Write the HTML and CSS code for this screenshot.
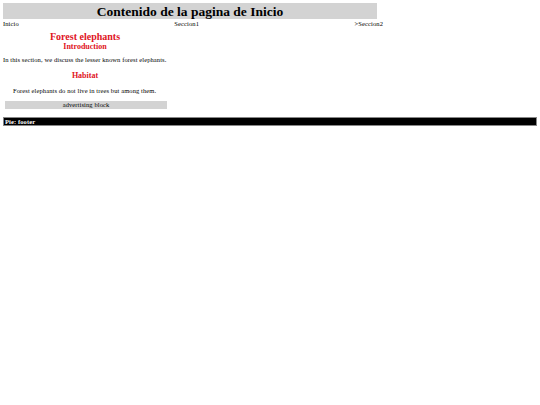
FILE: index.html
```html
<!DOCTYPE html>
<html lang="es">
<head>
<meta charset="utf-8">
<title>Inicio</title>
<link rel="stylesheet" href="styles.css">
</head>
<body>
<header class="site-header">
  <h1 class="site-title">Contenido de la pagina de Inicio</h1>
</header>
<nav class="site-nav">
  <span>Inicio</span>
  <span>Seccion1</span>
  <span>&gt;Seccion2</span>
</nav>
<main class="content">
  <article class="article">
    <h2 class="article-title">Forest elephants</h2>
    <h3 class="section-title">Introduction</h3>
    <p class="text">In this section, we discuss the lesser known forest elephants.</p>
    <h3 class="section-title habitat">Habitat</h3>
    <p class="text indented">Forest elephants do not live in trees but among them.</p>
  </article>
  <aside class="ad">advertising block</aside>
</main>
<footer class="site-footer">Pie: footer</footer>
</body>
</html>
```
FILE: styles.css
```css
* { box-sizing: border-box; }
html, body { background: #ffffff; }
body {
  margin: 3px;
  font-family: "Liberation Serif", "Times New Roman", serif;
  font-size: 6.5px;
  letter-spacing: 0.1px;
  color: #000;
}
.site-header {
  width: 374px;
  height: 16px;
  background: #d3d3d3;
  display: flex;
  align-items: center;
  justify-content: center;
}
.site-title {
  margin: 0;
  font-size: 13.5px;
  line-height: 15px;
  font-weight: bold;
  letter-spacing: 0;
}
.site-nav {
  width: 380px;
  display: flex;
  justify-content: space-between;
  margin-top: 1px;
  line-height: 8px;
}
.content {
  width: 164px;
}
.article-title {
  margin: 3px 0 0;
  font-size: 10px;
  line-height: 11px;
  color: #e0141e;
  text-align: center;
  letter-spacing: 0;
}
.section-title {
  margin: 0;
  font-size: 8px;
  line-height: 10px;
  color: #e0141e;
  text-align: center;
  letter-spacing: 0;
}
.section-title.habitat { margin-top: 7px; }
.text {
  margin: 4px 0 5px;
  line-height: 8px;
  white-space: nowrap;
}
.indented { padding-left: 10px; margin-top: 6px; }
.ad {
  margin: 6px 0 0 2px;
  width: 162px;
  height: 8px;
  line-height: 8px;
  background: #d3d3d3;
  text-align: center;
}
.site-footer {
  margin-top: 8px;
  width: 534px;
  height: 9px;
  line-height: 7px;
  background: #000;
  color: #fff;
  font-weight: bold;
  padding-left: 1px;
  border: 1px solid #888;
}
```
